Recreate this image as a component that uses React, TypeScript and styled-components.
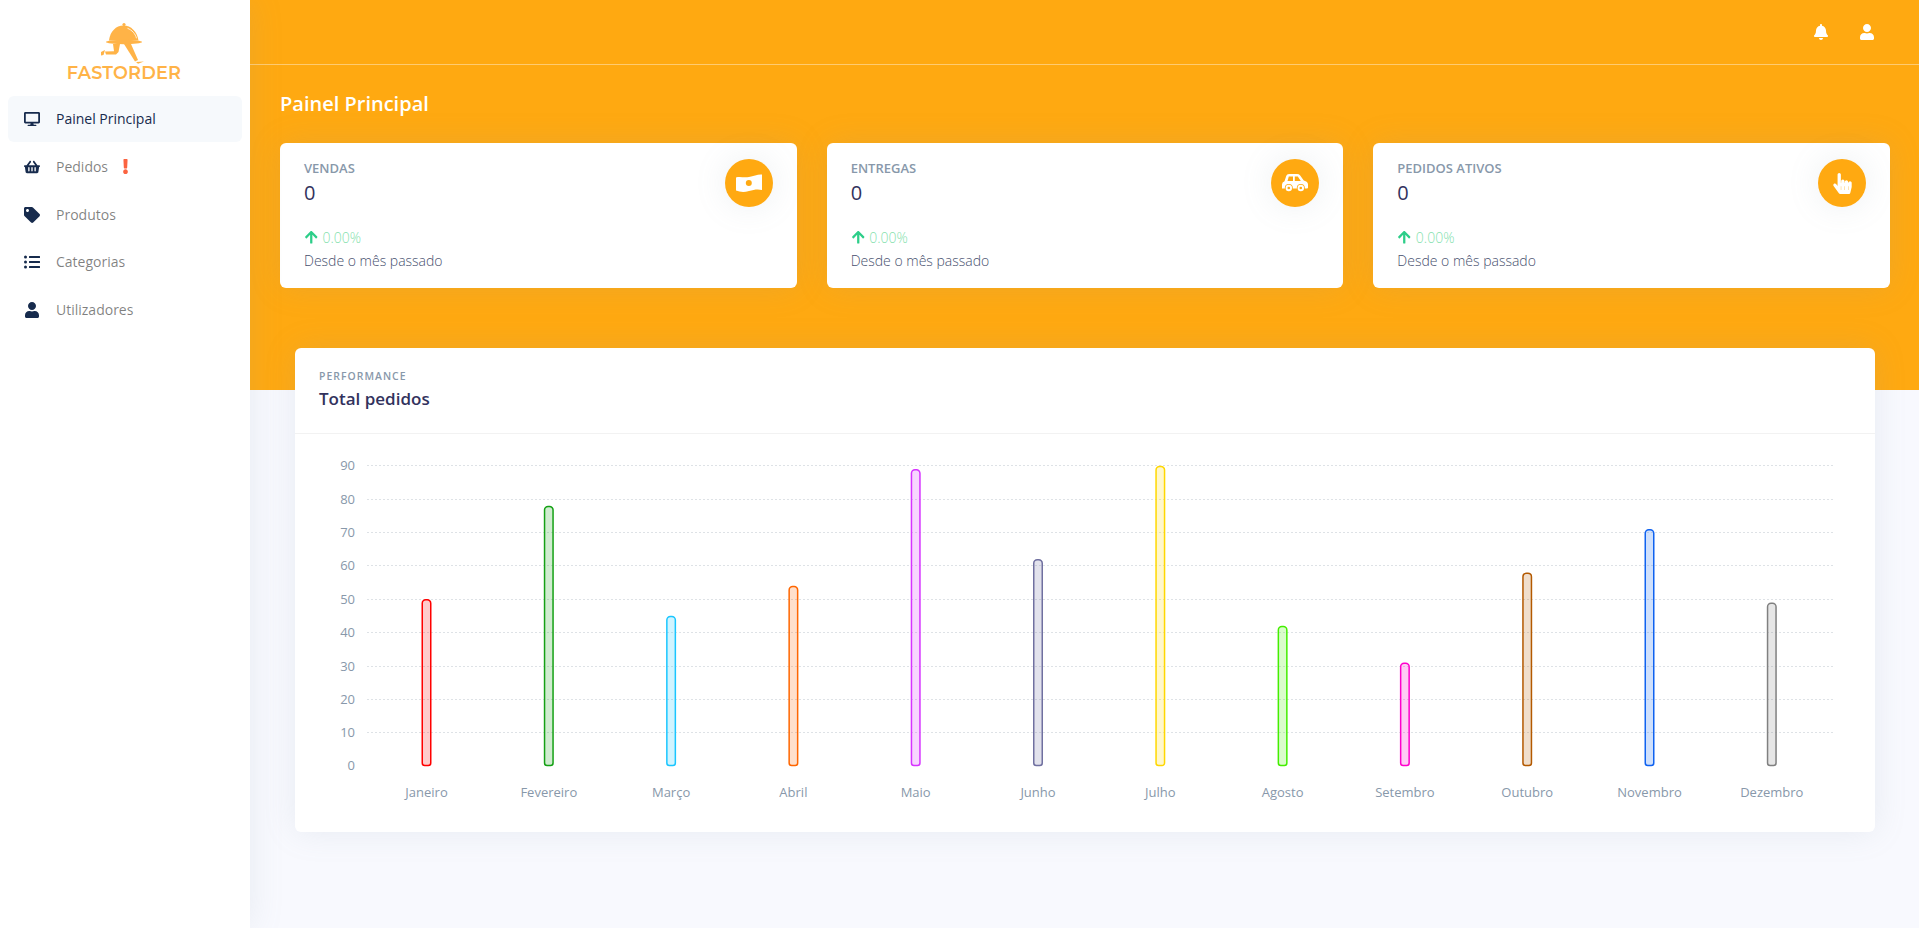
import React from 'react';
import styled, { createGlobalStyle } from 'styled-components';
import { FaArrowUp, FaBell, FaDesktop, FaExclamation, FaHandPointer, FaListUl, FaShoppingBasket, FaTag, FaUser } from 'react-icons/fa';

const Global = createGlobalStyle`
  html, body { margin: 0; padding: 0; }
  body { background: #f8f9fe; font-family: "Open Sans", "Liberation Sans", sans-serif; }
  * { box-sizing: border-box; }
`;

const Shell = styled.div`display: flex; height: 100vh; overflow: hidden;`;
const Sidebar = styled.aside`
  width: 250px; flex: none; background: #fff; padding: 0 8px;
  box-shadow: 0 0 32px rgba(136,152,170,.15); position: relative; z-index: 2;
`;
const Brand = styled.div`display: flex; flex-direction: column; align-items: center; height: 96px; padding: 22px 2px 0 0;`;
const BrandName = styled.div`font-family: "Montserrat", "Inter", "Liberation Sans", sans-serif; font-weight: 600; color: #ffb347; font-size: 17.7px; line-height: 18px; letter-spacing: .2px; margin-top: -2px;`;
const Nav = styled.nav`display: flex; flex-direction: column; gap: 1.75px;`;
const NavItem = styled.div<{ $active?: boolean }>`
  display: flex; align-items: center; height: 46px; padding: 0 16px; border-radius: 6px;
  background: ${p => p.$active ? '#f6f9fc' : 'transparent'};
  color: ${p => p.$active ? '#172b4d' : 'rgba(0,0,0,.5)'};
  font-size: 14px; line-height: 1;
`;
const NavIcon = styled.span`width: 32px; display: flex; color: #172b4d; font-size: 16px;`;
const Alert = styled.span`display: flex; color: #fb6340; font-size: 15px; margin-left: 10px;`;

const Main = styled.main`flex: 1; min-width: 0; position: relative;`;
const Hero = styled.div`background: #ffa911; height: 390px;`;
const Topbar = styled.header`
  height: 65px; border-bottom: 1px solid rgba(255,255,255,.4);
  display: flex; align-items: center; justify-content: flex-end; gap: 30px; padding: 0 44px 0 0; color: #fff; font-size: 16px;
`;
const TopIcon = styled.span`display: flex;`;
const HeroBody = styled.div`padding: 0 29px 0 30px;`;
const PageTitle = styled.h1`margin: 0; padding-top: 27px; font-size: 20px; line-height: 24px; font-weight: 600; color: #fff;`;
const Cards = styled.div`display: grid; grid-template-columns: repeat(3, 1fr); gap: 30px; margin-top: 27px;`;
const StatCard = styled.section`
  height: 145px; background: #fff; border-radius: 6px; padding: 16px 24px 0 24px; display: flex; justify-content: space-between;
  box-shadow: 0 0 32px rgba(136,152,170,.15);
`;
const StatTitle = styled.div`font-size: 13px; font-weight: 600; line-height: 18px; color: #8898aa; text-transform: uppercase;`;
const StatValue = styled.div`font-size: 20px; font-weight: 500; line-height: 24px; color: #32325d; margin-top: 4px;`;
const Trend = styled.div`display: flex; align-items: center; gap: 4px; margin-top: 21.5px; font-size: 14px; line-height: 21px; color: #85dfae; font-weight: 300;`;
const TrendIcon = styled.span`display: flex; color: #2dce89; font-size: 14.5px;`;
const Since = styled.div`font-size: 14px; line-height: 21px; margin-top: 2px; color: #47506e; font-weight: 300;`;
const IconCircle = styled.div`
  width: 48px; height: 48px; border-radius: 50%; background: #ffa911; color: #fff; display: flex; align-items: center; justify-content: center;
  font-size: 21px; box-shadow: 0 0 32px rgba(136,152,170,.15);
`;

const ChartCard = styled.section`
  position: absolute; left: 45px; top: 348px; width: 1580px; height: 484px; background: #fff; border-radius: 6px;
  box-shadow: 0 0 32px rgba(136,152,170,.15);
`;
const ChartHead = styled.div`height: 86px; padding: 20px 24px 0; border-bottom: 1px solid rgba(0,0,0,.05);`;
const Eyebrow = styled.div`font-size: 10.4px; font-weight: 600; letter-spacing: 1.04px; line-height: 16px; color: #8898aa; text-transform: uppercase;`;
const ChartTitle = styled.h2`margin: 3px 0 0; font-size: 17px; line-height: 24px; font-weight: 600; color: #32325d;`;
const ChartSvg = styled.svg`display: block;`;
const AxisText = styled.text`font-family: "Open Sans", "Liberation Sans", sans-serif; font-size: 13px; fill: #8898aa;`;

const bars: [string, number, string][] = [
  ['Janeiro', 50, '#ff0000'], ['Fevereiro', 78, '#14a014'], ['Março', 45, '#1ac6ff'], ['Abril', 54, '#ff6600'],
  ['Maio', 89, '#d633ff'], ['Junho', 62, '#7070a0'], ['Julho', 90, '#ffd700'], ['Agosto', 42, '#44ee00'],
  ['Setembro', 31, '#ff00cc'], ['Outubro', 58, '#b35900'], ['Novembro', 71, '#0f62f0'], ['Dezembro', 49, '#808080'],
];

const GRID = [331.5, 298.5, 265.5, 232.5, 198.5, 165.5, 131.5, 98.5, 65.5, 31.5];
const Y0 = 331.5, UNIT = 3.334, BW = 8.5;

function barPath(cx: number, top: number) {
  const l = cx - BW / 2, b = Y0;
  return `M${l} ${b - 2.5}V${top + 3.5}a3.5 3.5 0 0 1 3.5 -3.5h${BW - 7}a3.5 3.5 0 0 1 3.5 3.5V${b - 2.5}a2.5 2.5 0 0 1 -2.5 2.5h-${BW - 5}a2.5 2.5 0 0 1 -2.5 -2.5Z`;
}

function Chart() {
  return (
    <ChartSvg width={1580} height={397} viewBox="0 0 1580 397">
      {GRID.map((y, i) => (
        <g key={y}>
          {i > 0 && <line x1={72} x2={1538} y1={y} y2={y} stroke="#dee2e6" strokeWidth={1} strokeDasharray="2 2" />}
          <AxisText x={60} y={y + 4} textAnchor="end">{i * 10}</AxisText>
        </g>
      ))}
      {bars.map(([name, v, c], i) => {
        const cx = 131.5 + i * 122.3;
        return (
          <g key={name}>
            <path d={barPath(cx, Y0 - v * UNIT + 1)} fill={c} fillOpacity={.2} stroke={c} strokeWidth={1.5} />
            <AxisText x={cx} y={363} textAnchor="middle">{name}</AxisText>
          </g>
        );
      })}
    </ChartSvg>
  );
}

function Logo() {
  return (
    <svg width="60" height="44" viewBox="0 0 60 44" fill="#ffb347" aria-hidden="true">
      <circle cx="30" cy="2.500" r="1.600" />
      <path d="M15 18.500C16 9.500 22 3.500 29.500 3.500S43 9.500 44.500 18.500Z" />
      <path d="M33.500 6.300C38 8 41.500 12 42.500 16.300" stroke="#fff" strokeWidth=".8" fill="none" />
      <ellipse cx="30" cy="20" rx="18" ry="2.200" />
      <path d="M19 22h7l-1.500 8-2.500 2.500H12L11 29.500l9-.3Z" />
      <path d="M30 22h7l7 16-3 1.500Z" />
      <path d="M7 30l4-2-1.500 5-2.500.5ZM42 40l8-.5-6 2.300Z" />
    </svg>
  );
}

function MoneyIcon() {
  return (
    <svg width="26" height="18" viewBox="0 0 26 18" aria-hidden="true">
      <path fill="#fff" d="M0 3.500C4 2.300 8 4 13 3S22 0 26 .5V16C22 15 18 15.500 13 17S4 18 0 16.500Z" />
      <circle cx="12.800" cy="9" r="3" fill="#ffa911" />
    </svg>
  );
}

function CarIcon() {
  return (
    <svg width="26" height="18" viewBox="0 0 26 18" aria-hidden="true">
      <path fill="#fff" d="M0 14.500V10.500Q0 8 2.500 7.300L4.300 1.800Q4.800 0 7 0H15Q17 0 18 1.200L21.800 6.500Q26 7.500 26 10.500V13.500Q26 14.500 25 14.500Z" />
      <path fill="#ffa911" d="M6.800 2.600H11V7H5.500ZM12.800 2.600H15.800L18.800 7H12.800Z" />
      {[6.800, 18.800].map(cx => (
        <g key={cx}>
          <circle cx={cx} cy="14" r="4" fill="#ffa911" />
          <circle cx={cx} cy="14" r="3.200" fill="#fff" />
          <circle cx={cx} cy="14" r="1.300" fill="#ffa911" />
        </g>
      ))}
    </svg>
  );
}

const stats = [
  { title: 'Vendas', icon: <MoneyIcon /> },
  { title: 'Entregas', icon: <CarIcon /> },
  { title: 'Pedidos ativos', icon: <FaHandPointer /> },
];

export default function App() {
  return (
    <Shell>
      <Global />
      <Sidebar>
        <Brand>
          <Logo />
          <BrandName>FASTORDER</BrandName>
        </Brand>
        <Nav>
          <NavItem $active><NavIcon><FaDesktop /></NavIcon>Painel Principal</NavItem>
          <NavItem><NavIcon><FaShoppingBasket /></NavIcon>Pedidos<Alert><FaExclamation /></Alert></NavItem>
          <NavItem><NavIcon><FaTag /></NavIcon>Produtos</NavItem>
          <NavItem><NavIcon><FaListUl /></NavIcon>Categorias</NavItem>
          <NavItem><NavIcon><FaUser /></NavIcon>Utilizadores</NavItem>
        </Nav>
      </Sidebar>
      <Main>
        <Hero>
          <Topbar>
            <TopIcon><FaBell /></TopIcon>
            <TopIcon><FaUser /></TopIcon>
          </Topbar>
          <HeroBody>
            <PageTitle>Painel Principal</PageTitle>
            <Cards>
              {stats.map(s => (
                <StatCard key={s.title}>
                  <div>
                    <StatTitle>{s.title}</StatTitle>
                    <StatValue>0</StatValue>
                    <Trend><TrendIcon><FaArrowUp /></TrendIcon>0.00%</Trend>
                    <Since>Desde o mês passado</Since>
                  </div>
                  <IconCircle>{s.icon}</IconCircle>
                </StatCard>
              ))}
            </Cards>
          </HeroBody>
        </Hero>
        <ChartCard>
          <ChartHead>
            <Eyebrow>Performance</Eyebrow>
            <ChartTitle>Total pedidos</ChartTitle>
          </ChartHead>
          <Chart />
        </ChartCard>
      </Main>
    </Shell>
  );
}
